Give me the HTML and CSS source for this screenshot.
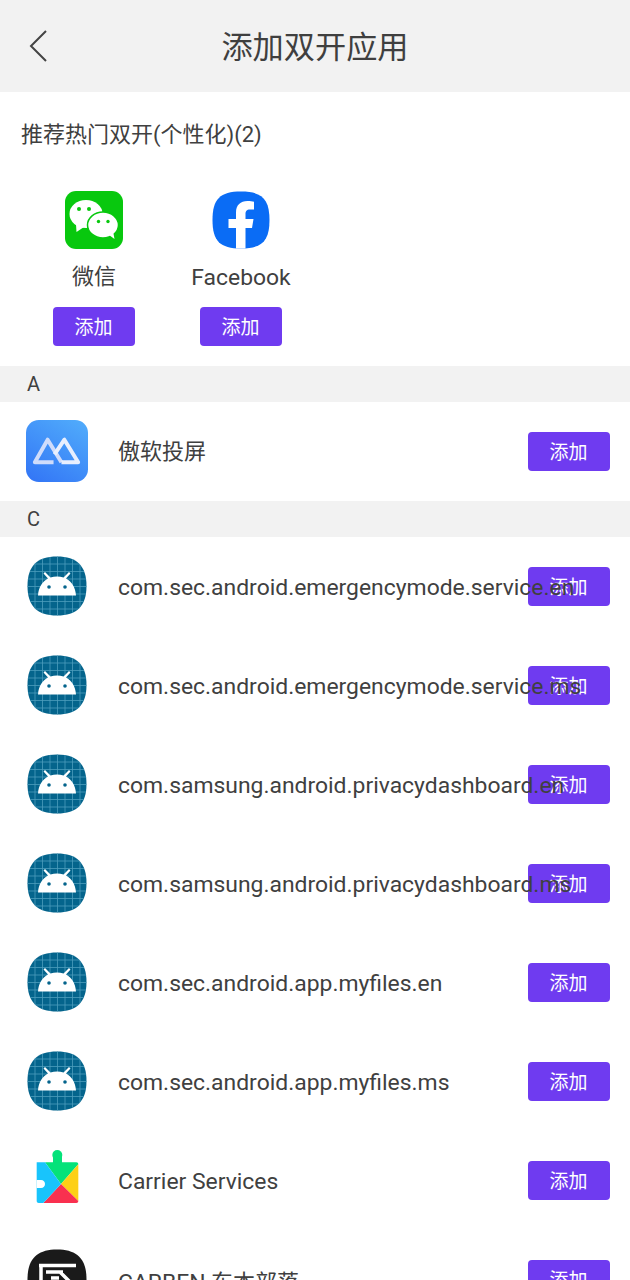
FILE: index.html
```html
<!DOCTYPE html>
<html>
<head>
    <title>添加双开应用</title>
    <link rel="stylesheet" href="styles.css">
</head>
<body>
    <svg class="defs" width="0" height="0">
        <defs>
            <clipPath id="android-clip">
                <path d="M30 0.5C50 0.5 59.5 10 59.5 30S50 59.5 30 59.5 0.5 50 0.5 30 10 0.5 30 0.5Z"/>
            </clipPath>
            <g id="android-icon">
                <path d="M30 0.5C50 0.5 59.5 10 59.5 30S50 59.5 30 59.5 0.5 50 0.5 30 10 0.5 30 0.5Z" fill="#04648c"/>
                <path d="M8 0V60M15.500 0V60M23 0V60M30.500 0V60M38 0V60M45.500 0V60M53 0V60M0 8H60M0 15.500H60M0 23H60M0 30.500H60M0 38H60M0 45.500H60M0 53H60" stroke="#4d9dbd" stroke-width="0.8" clip-path="url(#android-clip)"/>
                <path d="M11 39.500C11.500 31 15.500 25.500 21 22.500L16.500 17.500 18 16 23.500 21.500C27.500 20 32.500 20 36.500 21.500L42 16 43.500 17.500 39 22.500C44.500 25.500 48.500 31 49 39.500Z" fill="#fff"/>
                <circle cx="22" cy="31" r="1.800" fill="#04648c"/>
                <circle cx="38" cy="31" r="1.800" fill="#04648c"/>
            </g>
            <linearGradient id="cast-bg" x1="0.8" y1="0" x2="0.2" y2="1">
                <stop offset="0" stop-color="#4fa9fb"/>
                <stop offset="1" stop-color="#3478f6"/>
            </linearGradient>
        </defs>
    </svg>

    <div class="header">
        <svg class="back-icon" width="20" height="34" viewBox="0 0 20 34">
            <path d="M18 2L3 17L18 32" fill="none" stroke="#444" stroke-width="2"/>
        </svg>
        <h1 class="header-title">添加双开应用</h1>
    </div>

    <div class="hot">
        <h2 class="hot-title">推荐热门双开(个性化)(2)</h2>
        <div class="hot-list">
            <div class="hot-item">
                <svg class="hot-icon" viewBox="0 0 58 58">
                    <rect width="58" height="58" rx="11" fill="#08c80e"/>
                    <ellipse cx="21" cy="23" rx="16.500" ry="14" fill="#fff"/>
                    <path d="M11 33L11.500 41 19 36Z" fill="#fff"/>
                    <ellipse cx="38" cy="34" rx="15.500" ry="13" fill="#fff" stroke="#08c80e" stroke-width="1.500"/>
                    <path d="M44 44L49.500 48 48 40Z" fill="#fff"/>
                    <circle cx="14" cy="18" r="2" fill="#08c80e"/>
                    <circle cx="24" cy="18" r="2" fill="#08c80e"/>
                    <circle cx="33.500" cy="30.500" r="1.700" fill="#08c80e"/>
                    <circle cx="43" cy="30.500" r="1.700" fill="#08c80e"/>
                </svg>
                <span class="hot-name">微信</span>
                <button class="add-btn">添加</button>
            </div>
            <div class="hot-item">
                <svg class="hot-icon" viewBox="0 0 58 58">
                    <path d="M29 0.500C50 0.500 57.500 8 57.500 29S50 57.500 29 57.500 0.500 50 0.500 29 8 0.500 29 0.500Z" fill="#0a6cf5"/>
                    <path d="M24 57.500V37H16.500V28H24V21.500C24 14 28.500 10 35.500 10C38 10 40.500 10.400 42 10.800V18.500H38C34.500 18.500 33.500 20.500 33.500 23V28H41.500L40 37H33.500V57.500Z" fill="#fff"/>
                </svg>
                <span class="hot-name latin">Facebook</span>
                <button class="add-btn">添加</button>
            </div>
        </div>
    </div>

    <div class="letter">A</div>
    <div class="app-row">
        <svg class="app-icon" viewBox="0 0 63 63">
            <rect width="63" height="63" rx="13" fill="url(#cast-bg)"/>
            <path d="M28 43H9L22 20L36 43" fill="none" stroke="#cfdcfb" stroke-width="4" stroke-linejoin="round"/>
            <path d="M36 43H53L39 20L29 35" fill="none" stroke="#e8effe" stroke-width="4" stroke-linejoin="round"/>
        </svg>
        <span class="app-name cjk">傲软投屏</span>
        <button class="add-btn">添加</button>
    </div>

    <div class="letter">C</div>
    <div class="app-row">
        <svg class="app-icon" viewBox="-1 -1 62 62"><use href="#android-icon"/></svg>
        <span class="app-name latin">com.sec.android.emergencymode.service.en</span>
        <button class="add-btn">添加</button>
    </div>
    <div class="app-row">
        <svg class="app-icon" viewBox="-1 -1 62 62"><use href="#android-icon"/></svg>
        <span class="app-name latin">com.sec.android.emergencymode.service.ms</span>
        <button class="add-btn">添加</button>
    </div>
    <div class="app-row">
        <svg class="app-icon" viewBox="-1 -1 62 62"><use href="#android-icon"/></svg>
        <span class="app-name latin">com.samsung.android.privacydashboard.en</span>
        <button class="add-btn">添加</button>
    </div>
    <div class="app-row">
        <svg class="app-icon" viewBox="-1 -1 62 62"><use href="#android-icon"/></svg>
        <span class="app-name latin">com.samsung.android.privacydashboard.ms</span>
        <button class="add-btn">添加</button>
    </div>
    <div class="app-row">
        <svg class="app-icon" viewBox="-1 -1 62 62"><use href="#android-icon"/></svg>
        <span class="app-name latin">com.sec.android.app.myfiles.en</span>
        <button class="add-btn">添加</button>
    </div>
    <div class="app-row">
        <svg class="app-icon" viewBox="-1 -1 62 62"><use href="#android-icon"/></svg>
        <span class="app-name latin">com.sec.android.app.myfiles.ms</span>
        <button class="add-btn">添加</button>
    </div>
    <div class="app-row">
        <svg class="app-icon" viewBox="0 0 62 62">
            <path d="M27 14V6H36V14Z" fill="#05e27a"/>
            <circle cx="31.300" cy="6" r="5" fill="#05e27a"/>
            <path d="M19 13.300H50.300C51.500 13.300 52.300 14 52.300 15.300L35 35Z" fill="#05e27a"/>
            <path d="M52.300 15.300V52L35 35Z" fill="#fdd017"/>
            <path d="M35 35L52.300 52C52.300 53.200 51.500 54 50.300 54H17.300Z" fill="#f9304f"/>
            <path d="M12.700 13.300H19L35 35 17.300 54H12.700C11.500 54 10.700 53.200 10.700 52V13.300Z" fill="#18c4fc"/>
            <path d="M10.700 31H15C17.500 31 19 33 19 35S17.500 39 15 39H10.700Z" fill="#fff"/>
        </svg>
        <span class="app-name latin">Carrier Services</span>
        <button class="add-btn">添加</button>
    </div>
    <div class="app-row">
        <svg class="app-icon" viewBox="-1 -1 62 62">
            <path d="M30 0.5C50 0.5 59.500 10 59.500 30S50 59.500 30 59.500 0.500 50 0.500 30 10 0.500 30 0.500Z" fill="#1a1a1a"/>
            <path d="M12 16.500H49M14 16.500V32M19 23H36M24 29H32M33 23L44 34" fill="none" stroke="#fff" stroke-width="3.500"/>
        </svg>
        <span class="app-name"><span class="latin">CARBEN</span> 东本部落</span>
        <button class="add-btn">添加</button>
    </div>
</body>
</html>
```

FILE: styles.css
```css
html, body {
    height: 1280px;
    overflow: hidden;
}
body {
    margin: 0;
    background-color: #fff;
    color: #404040;
    font-family: Roboto, "Noto Sans CJK SC", sans-serif;
}
.defs {
    position: absolute;
}
.header {
    display: flex;
    align-items: center;
    justify-content: center;
    height: 92px;
    background-color: #f2f2f2;
    position: relative;
}
.back-icon {
    position: absolute;
    left: 28px;
    top: 29px;
}
.header-title {
    margin: 0;
    padding-top: 3px;
    font-size: 31.200px;
    font-weight: 400;
    line-height: 89px;
    color: #3f3f3f;
}
.hot {
    height: 274px;
    padding-left: 21px;
    box-sizing: border-box;
}
.hot-title {
    margin: 0;
    padding-top: 27px;
    font-size: 22px;
    font-weight: 400;
    line-height: 32px;
}
.hot-list {
    display: flex;
    gap: 65px;
    margin-top: 40px;
    padding-left: 32px;
}
.hot-item {
    display: flex;
    flex-direction: column;
    align-items: center;
    width: 82px;
}
.hot-icon {
    width: 58px;
    height: 58px;
    flex: none;
}
.hot-name {
    margin-top: 12px;
    font-size: 22px;
    line-height: 32px;
    white-space: nowrap;
}
.hot-name.latin {
    padding-top: 1px;
    margin-bottom: -1px;
}
.add-btn {
    flex: none;
    width: 82px;
    height: 39px;
    padding: 0 1px 2px 0;
    border: none;
    border-radius: 4px;
    background-color: #6f3bf0;
    color: #fff;
    font-family: inherit;
    font-size: 19px;
}
.hot-item .add-btn {
    margin-top: 14px;
}
.letter {
    height: 36px;
    padding-left: 27px;
    background-color: #f2f2f2;
    font-size: 20px;
    line-height: 37px;
}
.app-row {
    display: flex;
    align-items: center;
    height: 99px;
    padding: 0 20px 0 26px;
}
.app-icon {
    flex: none;
    width: 62px;
    height: 62px;
    margin-bottom: 2px;
}
.app-name {
    flex: 1;
    min-width: 0;
    z-index: 1;
    margin-left: 30px;
    font-size: 22px;
    white-space: nowrap;
}
.cjk {
    padding-bottom: 5px;
}
.latin {
    font-size: 22.900px;
}
.app-name.latin {
    padding-top: 1px;
}
```
